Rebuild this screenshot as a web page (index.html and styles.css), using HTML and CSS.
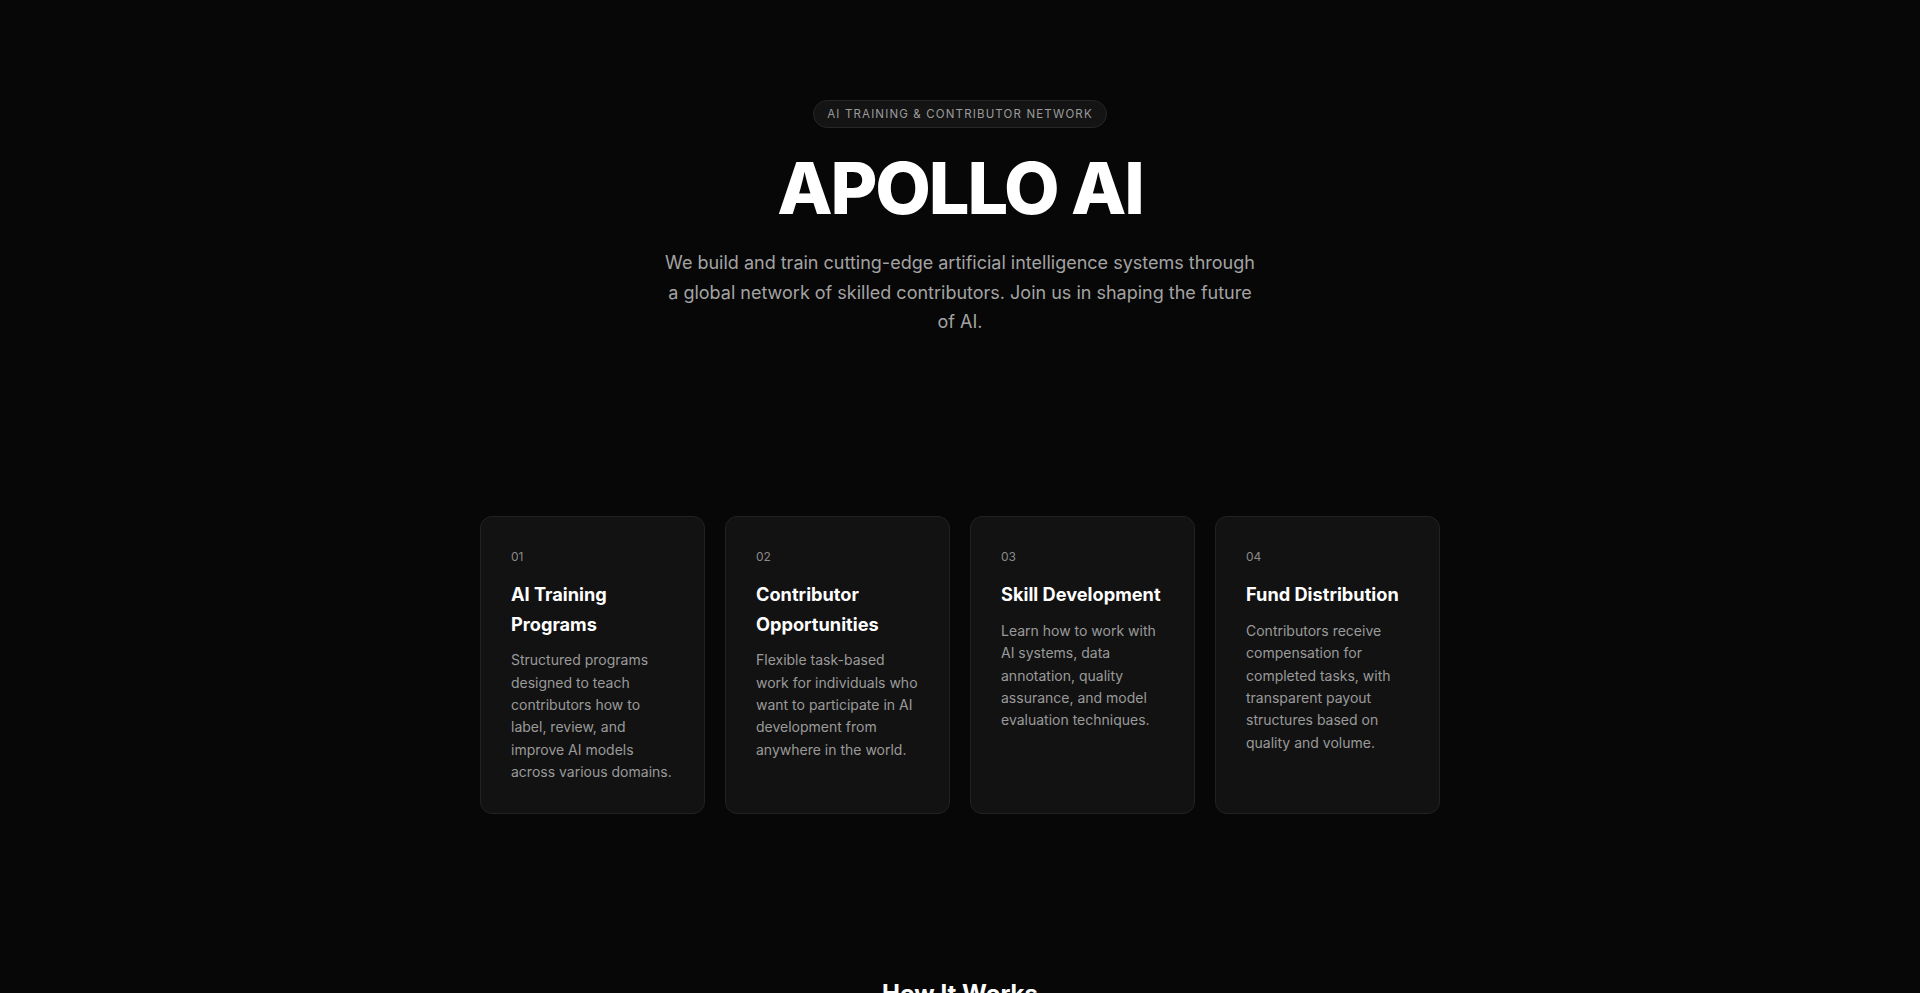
FILE: index.html
```html
<!DOCTYPE html>
<html lang="en">
<head>
<meta charset="utf-8">
<title>Apollo AI</title>
<link rel="stylesheet" href="styles.css">
</head>
<body>
<main class="page">
  <section class="hero">
    <span class="pill">AI Training &amp; Contributor Network</span>
    <h1 class="title">APOLLO AI</h1>
    <p class="lead">We build and train cutting-edge artificial intelligence systems through a global network of skilled contributors. Join us in shaping the future of AI.</p>
  </section>

  <section class="features">
    <article class="card">
      <span class="num">01</span>
      <h3 class="card-title">AI Training Programs</h3>
      <p class="card-text">Structured programs designed to teach contributors how to label, review, and improve AI models across various domains.</p>
    </article>
    <article class="card">
      <span class="num">02</span>
      <h3 class="card-title">Contributor Opportunities</h3>
      <p class="card-text">Flexible task-based work for individuals who want to participate in AI development from anywhere in the world.</p>
    </article>
    <article class="card">
      <span class="num">03</span>
      <h3 class="card-title">Skill Development</h3>
      <p class="card-text">Learn how to work with AI systems, data annotation, quality assurance, and model evaluation techniques.</p>
    </article>
    <article class="card">
      <span class="num">04</span>
      <h3 class="card-title">Fund Distribution</h3>
      <p class="card-text">Contributors receive compensation for completed tasks, with transparent payout structures based on quality and volume.</p>
    </article>
  </section>

  <section class="how">
    <h2 class="how-title">How It Works</h2>
  </section>
</main>
</body>
</html>
```

FILE: styles.css
```css
* { box-sizing: border-box; }

html, body {
  margin: 0;
  padding: 0;
  background: #070707;
}

body {
  font-family: Inter, "Noto Sans", "Liberation Sans", sans-serif;
  color: #ffffff;
  -webkit-font-smoothing: antialiased;
}

.page {
  display: flex;
  flex-direction: column;
  align-items: center;
}

.hero {
  display: flex;
  flex-direction: column;
  align-items: center;
  padding-top: 100px;
  text-align: center;
}

.pill {
  display: inline-flex;
  align-items: center;
  height: 28px;
  padding: 0 13px;
  border: 1px solid #262626;
  border-radius: 999px;
  background: #141414;
  color: #9b9b9b;
  font-size: 11.5px;
  letter-spacing: 0.1em;
  text-transform: uppercase;
}

.title {
  margin: 20px 0 0;
  font-size: 72px;
  line-height: 1.1;
  font-weight: 800;
  letter-spacing: -0.03em;
  color: #ffffff;
}

.lead {
  margin: 21px 0 0;
  max-width: 600px;
  font-size: 18px;
  line-height: 29.4px;
  color: #a3a3a3;
}

.features {
  display: grid;
  grid-template-columns: repeat(4, 1fr);
  gap: 20px;
  width: 960px;
  margin-top: 180px;
}

.card {
  display: flex;
  flex-direction: column;
  padding: 31px 30px 29px;
  border: 1px solid #222222;
  border-radius: 12px;
  background: #121212;
}

.num {
  font-size: 12px;
  line-height: 18px;
  color: #8a8a8a;
}

.card-title {
  margin: 14px 0 0;
  font-size: 18.2px;
  line-height: 29.4px;
  font-weight: 700;
  color: #ffffff;
}

.card-text {
  margin: 10px 0 0;
  font-size: 14px;
  line-height: 1.6;
  color: #9a9a9a;
}

.how {
  margin-top: 166px;
  padding-bottom: 80px;
}

.how-title {
  margin: 0;
  font-size: 24px;
  line-height: 1.2;
  font-weight: 700;
  color: #ffffff;
}
```
